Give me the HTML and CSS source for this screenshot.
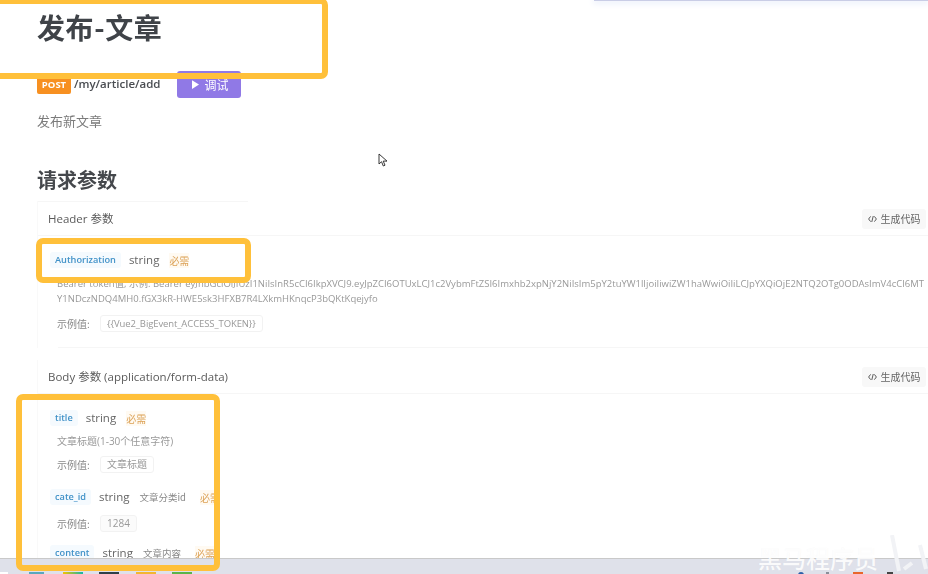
FILE: index.html
```html
<!DOCTYPE html>
<html lang="zh">
<head>
<meta charset="utf-8">
<title>发布-文章</title>
<link rel="stylesheet" href="styles.css">
</head>
<body>
<div class="page">
  <div class="topbar"></div>
  <main class="doc">
    <h1 class="title">发布-文章</h1>
    <div class="endpoint">
      <span class="method">POST</span>
      <span class="path">/my/article/add</span>
      <span class="debug"><svg class="play" viewBox="0 0 8 10" width="7" height="9"><path d="M0 0L8 5L0 10Z" fill="#fff"/></svg>调试</span>
    </div>
    <p class="desc">发布新文章</p>
    <h2 class="heading">请求参数</h2>

    <section class="card header-card">
      <div class="card-top"></div>
      <div class="card-head">
        <span class="card-title">Header 参数</span>
        <span class="gen"><svg class="code" viewBox="0 0 12 10" width="9" height="8"><path d="M3.5 1.5L.8 5l2.700 3.500M8.500 1.500L11.200 5 8.500 8.500M7 1L5 9" fill="none" stroke="#555" stroke-width="1.300"/></svg>生成代码</span>
      </div>
      <div class="param auth">
        <div class="param-row"><span class="name">Authorization</span><span class="type">string</span><span class="req">必需</span></div>
        <p class="note token">Bearer token值, 示例: Bearer eyJhbGciOiJIUzI1NiIsInR5cCI6IkpXVCJ9.eyJpZCI6OTUxLCJ1c2VybmFtZSI6Imxhb2xpNjY2NiIsIm5pY2tuYW1lIjoiIiwiZW1haWwiOiIiLCJpYXQiOjE2NTQ2OTg0ODAsImV4cCI6MT<br>Y1NDczNDQ4MH0.fGX3kR-HWE5sk3HFXB7R4LXkmHKnqcP3bQKtKqejyfo</p>
        <div class="example"><span class="ex-label">示例值:</span><span class="chip">{{Vue2_BigEvent_ACCESS_TOKEN}}</span></div>
      </div>
    </section>

    <section class="card body-card">
      <div class="card-head">
        <span class="card-title">Body 参数 (application/form-data)</span>
        <span class="gen"><svg class="code" viewBox="0 0 12 10" width="9" height="8"><path d="M3.5 1.5L.8 5l2.700 3.500M8.500 1.500L11.200 5 8.500 8.500M7 1L5 9" fill="none" stroke="#555" stroke-width="1.300"/></svg>生成代码</span>
      </div>
      <div class="param first">
        <div class="param-row"><span class="name">title</span><span class="type">string</span><span class="req">必需</span></div>
        <p class="note">文章标题(1-30个任意字符)</p>
        <div class="example"><span class="ex-label">示例值:</span><span class="chip">文章标题</span></div>
      </div>
      <div class="param second">
        <div class="param-row"><span class="name">cate_id</span><span class="type">string</span><span class="inline-note">文章分类id</span><span class="req">必需</span></div>
        <div class="example"><span class="ex-label">示例值:</span><span class="chip grey">1284</span></div>
      </div>
      <div class="param third">
        <div class="param-row"><span class="name">content</span><span class="type">string</span><span class="inline-note">文章内容</span><span class="req">必需</span></div>
      </div>
    </section>
  </main>

  <div class="taskbar">
    <span class="task t0"></span><span class="task t1"></span><span class="task t2"></span><span class="task t3"></span><span class="task t4"></span><span class="task t5"></span>
    <span class="task t6"></span><span class="task t7"></span><span class="task t8"></span><span class="task t9"></span>
  </div>

  <div class="frame frame-title"></div>
  <div class="frame frame-auth"></div>
  <div class="frame frame-body"></div>
  <span class="watermark">黑马程序员</span>
  <svg class="wm-logo" viewBox="0 0 38 39" width="38" height="39"><path d="M2 0L9 36M14 34L22 28M30 10L36 34" fill="none" stroke="#f2f3f6" stroke-width="4"/></svg>
  <svg class="cursor" viewBox="0 0 10 14" width="10" height="14"><path d="M1 1v10l2.500-2.300L5.300 13l1.700-.8-1.800-4.100H9Z" fill="#fff" stroke="#222" stroke-width=".9"/></svg>
</div>
</body>
</html>
```
FILE: styles.css
```css
* { box-sizing: border-box; }
html, body { margin: 0; height: 100%; overflow: hidden; background: #fff; }
body { font-family: "Noto Sans CJK SC", "Open Sans", "Noto Sans", sans-serif; }
.page { position: relative; width: 928px; height: 574px; overflow: hidden; display: flex; flex-direction: column; background: #fff; }
.topbar { position: absolute; top: 0; left: 594px; right: 0; height: 1px; background: #c9cde6; box-shadow: 0 1px 6px 1px #dfe6f8; }
.doc { flex: 1; min-height: 0; padding: 0 0 0 37px; overflow: hidden; color: #444; filter: blur(.35px); }
.title { margin: 8px 0 0; font-size: 28px; line-height: 38px; font-weight: 700; letter-spacing: .6px; color: #3f4348; }
.endpoint { display: flex; align-items: flex-start; margin-top: 25px; height: 27px; }
.method { width: 34px; height: 18px; margin-top: 5px; border-radius: 2px; background: #f79021; color: #fff; font: 700 9.500px/18px "Open Sans", sans-serif; text-align: center; }
.path { margin-left: 3px; margin-top: 4px; font: 600 11.500px/18px "Open Sans", sans-serif; color: #4a4d52; }
.debug { display: flex; align-items: center; gap: 6px; width: 64px; height: 27px; margin-left: 16px; padding-left: 15px; border-radius: 3px; background: #9079e6; color: #fff; font-size: 12px; }
.desc { margin: 13px 0 0; font-size: 13px; line-height: 20px; color: #7b7b7b; }
.heading { margin: 34px 0 0; font-size: 20px; line-height: 30px; font-weight: 700; color: #45484c; }
.card { border-left: 1px solid #f9f9f9; }
.header-card { margin-top: 6px; padding-bottom: 16px; background: linear-gradient(#f6f6f6, #f6f6f6) 20px 100% / 100% 1px no-repeat; }
.card-top { width: 210px; height: 1px; background: #f6f6f6; }
.card-head { display: flex; align-items: center; justify-content: space-between; height: 34px; padding-left: 10px; padding-right: 2px; border-bottom: 1px solid #f6f6f6; }
.card-title { font: 400 11.500px/20px "Open Sans", "Noto Sans CJK SC", sans-serif; color: #5a5a5a; }
.gen { display: flex; align-items: center; gap: 4px; width: 64px; height: 20px; justify-content: center; border-radius: 3px; background: #f8f8f8; font-size: 10px; color: #666; }
.param { padding-left: 10px; }
.param-row { display: flex; align-items: center; height: 20px; }
.name { margin-left: 2px; padding: 0 5px; height: 16px; border-radius: 3px; background: #f5fafe; color: #4192c8; font: 600 9.200px/15px "Open Sans", sans-serif; }
.type { margin-left: 8px; font: 400 11.500px/20px "Open Sans", sans-serif; color: #666; }
.req { margin-left: 10px; font-size: 10px; color: #dca257; background: #fffaf2; }
.inline-note { margin-left: 10px; font-size: 9.500px; color: #888; }
.inline-note + .req { margin-left: 14px; }
.note { margin: 0; padding-left: 9px; font: 400 10px/15px "Open Sans", "Noto Sans CJK SC", sans-serif; color: #999; }
.example { display: flex; align-items: center; padding-left: 9px; height: 18px; font-size: 10px; color: #888; }
.ex-label { width: 43px; }
.chip { padding: 0 6px; height: 17px; border: 1px solid #f2f2f2; border-radius: 3px; font: 400 10px/15px "Open Sans", "Noto Sans CJK SC", sans-serif; color: #999; background: #fff; white-space: nowrap; }
.chip.grey { background: #fbfbfb; }
.auth { margin-top: 14px; }
.auth .note { margin-top: 6px; }
.token { font-size: 9.500px; white-space: nowrap; }
.auth .chip { font-size: 9.500px; letter-spacing: -.1px; }
.auth .example { margin-top: 8px; }
.body-card { margin-top: 12px; }
.first { margin-top: 14px; }
.first .note { margin-top: 6px; }
.first .example { margin-top: 6px; }
.second { margin-top: 14px; }
.second .example { margin-top: 7px; }
.third { margin-top: 11px; }
.taskbar { position: relative; flex: 0 0 16px; background: #dfe1ea; border-top: 1px solid #c9c9c9; overflow: hidden; }
.task { position: absolute; top: 13px; height: 6px; width: 20px; }
.t0 { left: 0; width: 8px; background: #fff; }
.t1 { left: 29px; width: 15px; background: #5aa8bd; }
.t2 { left: 63px; background: linear-gradient(90deg, #f5c400, #12b8a6); }
.t3 { left: 99px; background: #2f4048; }
.t4 { left: 136px; background: #f2b632; }
.t5 { left: 172px; background: #5ab54a; }
.t6 { left: 798px; width: 6px; background: #2c5fa8; border-radius: 3px 3px 0 0; }
.t7 { left: 826px; width: 3px; background: #8a8f9a; }
.t8 { left: 853px; width: 10px; background: #e8662c; }
.t9 { left: 887px; width: 6px; background: #444; }
.watermark { position: absolute; left: 758px; top: 543px; font-size: 24px; line-height: 30px; color: rgba(255, 255, 255, .88); font-weight: 500; white-space: nowrap; text-shadow: 0 0 1px rgba(0, 0, 0, .04); }
.wm-logo { position: absolute; left: 890px; top: 535px; }
.frame { position: absolute; border: 6px solid #ffc03a; border-radius: 7px; pointer-events: none; }
.frame-title { left: -12px; top: -2px; width: 340px; height: 81px; }
.frame-auth { left: 36px; top: 238px; width: 215px; height: 45px; }
.frame-body { left: 16px; top: 394px; width: 204px; height: 177px; }
.cursor { position: absolute; left: 378px; top: 153px; }
```
